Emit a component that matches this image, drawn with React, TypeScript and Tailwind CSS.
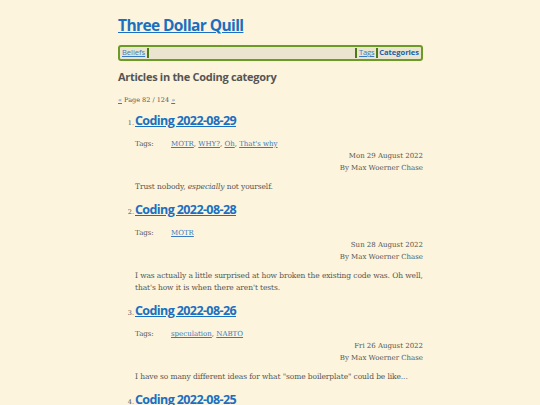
import React from 'react';

const articles = [
  {
    n: 1,
    title: 'Coding 2022-08-29',
    tags: ['MOTR', 'WHY?', 'Oh', "That's why"],
    date: 'Mon 29 August 2022',
    summary: (
      <>
        Trust nobody, <em>especially</em> not yourself.
      </>
    ),
  },
  {
    n: 2,
    title: 'Coding 2022-08-28',
    tags: ['MOTR'],
    date: 'Sun 28 August 2022',
    summary: (
      <>
        I was actually a little surprised at how broken the existing code was. Oh well,
        that's how it is when there aren't tests.
      </>
    ),
  },
  {
    n: 3,
    title: 'Coding 2022-08-26',
    tags: ['speculation', 'NABTO'],
    date: 'Fri 26 August 2022',
    summary: <>I have so many different ideas for what "some boilerplate" could be like...</>,
  },
  {
    n: 4,
    title: 'Coding 2022-08-25',
    tags: ['MOTR'],
    date: 'Thu 25 August 2022',
    summary: <>More stuff.</>,
  },
];

const sans = "font-['Open_Sans','Noto_Sans',sans-serif]";
const serif = "font-['DejaVu_Serif','Liberation_Serif',serif]";

export default function App() {
  return (
    <div className="bg-[#fcf4dc] overflow-hidden h-[405px]">
      <div className="w-[305px] pt-[13px] ml-[118px]">
        {/* Site title */}
        <h1 className={`${sans} text-[15.5px] font-bold leading-[24px] text-[#1a6fc1] underline tracking-[-0.6px]`}>
          Three Dollar Quill
        </h1>

        {/* Nav */}
        <nav className={`${sans} mt-[8px] h-[16px] border-2 border-[#6b9a26] rounded-[3px] bg-[#ebe4cf] flex items-center px-[2px] text-[7.5px] leading-none`}>
          <a className="text-[#3a7bc0] underline pr-[1px]">Beliefs</a>
          <span className="w-[2px] h-[10px] bg-[#4b7a16] ml-[1px]" />
          <span className="flex-1" />
          <span className="w-[2px] h-[10px] bg-[#4b7a16] mr-[1px]" />
          <a className="text-[#3a7bc0] underline px-[1px] tracking-[-0.2px]">Tags</a>
          <span className="w-[2px] h-[10px] bg-[#4b7a16] mx-[1px]" />
          <a className="text-[#1a5fa8] font-bold">Categories</a>
        </nav>

        <h2 className={`${sans} mt-[7px] text-[11px] font-bold text-[#555] leading-[18px] tracking-[-0.3px]`}>
          Articles in the Coding category
        </h2>

        <p className={`${serif} mt-[9px] text-[6.5px] text-[#555] leading-[10px]`}>
          <a className="text-[#3a7bc0] underline">«</a> Page 82 / 124{' '}
          <a className="text-[#3a7bc0] underline">»</a>
        </p>

        <ol className="mt-[7px]">
          {articles.map((a) => (
            <li key={a.n} className="mb-[8px]">
              <div className="flex items-baseline">
                <span className={`${serif} w-[17px] text-right pr-[1px] text-[6.5px] text-[#555]`}>
                  {a.n}.
                </span>
                <a className={`${sans} text-[12.5px] font-bold text-[#1a6fc1] underline leading-[18px] tracking-[-0.6px]`}>
                  {a.title}
                </a>
              </div>
              <div className={`${serif} pl-[17px] text-[7px] text-[#555] leading-[12px]`}>
                <div className="flex mt-[8px]">
                  <span className="w-[36px]">Tags:</span>
                  <span>
                    {a.tags.map((t, i) => (
                      <React.Fragment key={t}>
                        <a className="text-[#3a7bc0] underline">{t}</a>
                        {i < a.tags.length - 1 ? ', ' : ''}
                      </React.Fragment>
                    ))}
                  </span>
                </div>
                <div className="text-right">{a.date}</div>
                <div className="text-right">By Max Woerner Chase</div>
                <p className="mt-[7px] text-[7.5px] leading-[12px] tracking-[-0.1px]">{a.summary}</p>
              </div>
            </li>
          ))}
        </ol>
      </div>
    </div>
  );
}
